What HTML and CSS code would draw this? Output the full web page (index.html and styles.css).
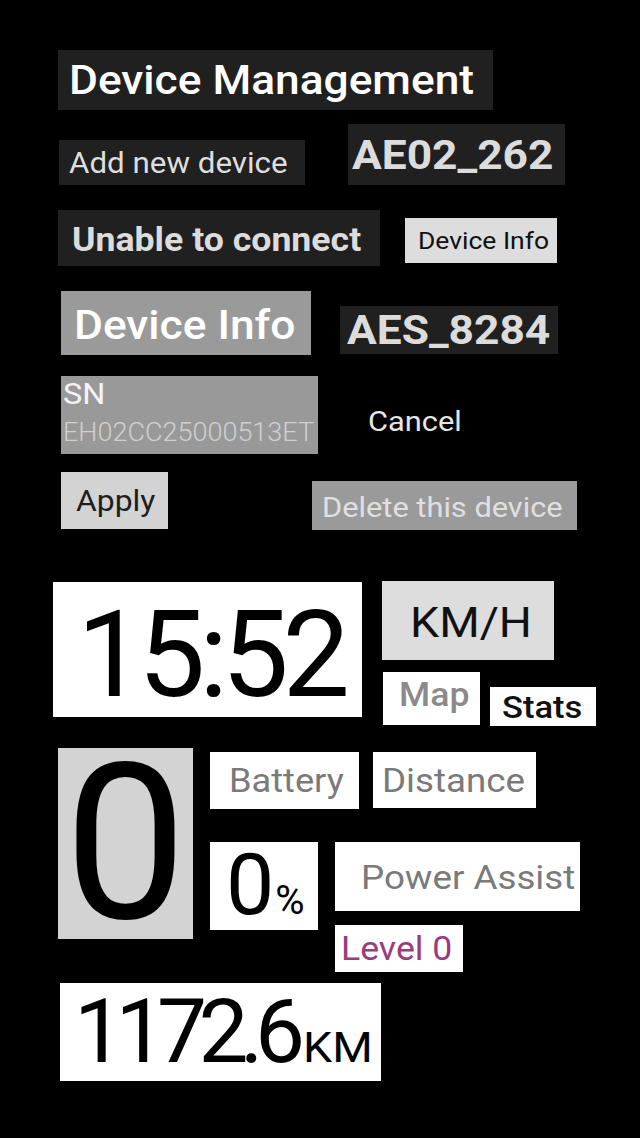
FILE: index.html
```html
<!DOCTYPE html>
<html lang="en">
<head>
<meta charset="utf-8">
<title>Device Management</title>
<link rel="stylesheet" href="styles.css">
</head>
<body>
<main class="screen">
  <div class="row r1">
    <div class="box title"><span class="t">Device Management</span></div>
  </div>
  <div class="row r2">
    <div class="box add"><span class="t">Add new device</span></div>
    <div class="box ae02"><span class="t">AE02_262</span></div>
  </div>
  <div class="row r3">
    <div class="box unable"><span class="t">Unable to connect</span></div>
    <div class="box info-sm"><span class="t">Device Info</span></div>
  </div>
  <div class="row r4">
    <div class="box info-lg"><span class="t">Device Info</span></div>
    <div class="box aes"><span class="t">AES_8284</span></div>
  </div>
  <div class="row r5">
    <div class="sn">
      <span class="t sn-label">SN</span>
      <span class="t sn-value">EH02CC25000513ET</span>
    </div>
    <div class="cancel"><span class="t">Cancel</span></div>
  </div>
  <div class="row r6">
    <div class="box apply"><span class="t">Apply</span></div>
    <div class="box delete"><span class="t">Delete this device</span></div>
  </div>
  <div class="row r7">
    <div class="box clock">15:52</div>
    <div class="col right7">
      <div class="box kmh"><span class="t">KM/H</span></div>
      <div class="row">
        <div class="box map"><span class="t">Map</span></div>
        <div class="box stats"><span class="t">Stats</span></div>
      </div>
    </div>
  </div>
  <div class="row r8">
    <div class="box speed">0</div>
    <div class="col mid8">
      <div class="row">
        <div class="box battery"><span class="t">Battery</span></div>
        <div class="box distance"><span class="t">Distance</span></div>
      </div>
      <div class="row r8b">
        <div class="box pct"><span class="pct-num">0</span><span class="pct-sign">%</span></div>
        <div class="col assist-col">
          <div class="box assist"><span class="t">Power Assist</span></div>
          <div class="box level"><span class="t">Level 0</span></div>
        </div>
      </div>
    </div>
  </div>
  <div class="row r9">
    <div class="box odo"><span class="odo-num">1172.6</span><span class="t odo-unit">KM</span></div>
  </div>
</main>
</body>
</html>
```

FILE: styles.css
```css
html, body {
  margin: 0;
  padding: 0;
  background: #000;
}
body {
  font-family: Roboto, "Liberation Sans", sans-serif;
  width: 640px;
  height: 1138px;
  overflow: hidden;
}
.screen {
  padding-top: 50px;
}
.row {
  display: flex;
  align-items: flex-start;
}
.col {
  display: flex;
  flex-direction: column;
  align-items: flex-start;
}
.box {
  display: flex;
  align-items: center;
  box-sizing: border-box;
  white-space: nowrap;
  flex: none;
}
/* the source screen's lettering is slightly wider than it is tall */
.t {
  display: inline-block;
  transform: scaleX(1.08);
  transform-origin: 0 50%;
  white-space: nowrap;
}

/* row 1 */
.title {
  margin-left: 58px;
  width: 435px;
  height: 60px;
  padding-left: 11px;
  background: #202020;
  color: #fff;
  font-size: 41px;
  font-weight: 500;
}

/* row 2 */
.r2 { margin-top: 14px; align-items: flex-end; }
.add {
  margin-left: 59px;
  width: 246px;
  height: 45px;
  padding-left: 10px;
  background: #202020;
  color: #dedede;
  font-size: 29px;
}
.ae02 {
  margin-left: 43px;
  width: 217px;
  height: 61px;
  padding-left: 4px;
  background: #202020;
  color: #dcdcdc;
  font-size: 41px;
  font-weight: 700;
}

/* row 3 */
.r3 { margin-top: 25px; }
.unable {
  margin-left: 58px;
  width: 322px;
  height: 56px;
  padding-left: 14px;
  padding-top: 2px;
  background: #202020;
  color: #dcdcdc;
  font-size: 33px;
  font-weight: 700;
}
.info-sm {
  margin-left: 25px;
  margin-top: 8px;
  width: 152px;
  height: 45px;
  padding-left: 13px;
  background: #dddddd;
  color: #111;
  font-size: 24.5px;
}

/* row 4 */
.r4 { margin-top: 25px; }
.info-lg {
  margin-left: 61px;
  width: 250px;
  height: 64px;
  padding-left: 13px;
  padding-top: 3px;
  background: #9a9a9a;
  color: #fff;
  font-size: 41px;
  font-weight: 500;
}
.aes {
  margin-left: 29px;
  margin-top: 15px;
  width: 218px;
  height: 48px;
  padding-left: 7px;
  background: #202020;
  color: #dcdcdc;
  font-size: 41px;
  font-weight: 700;
}

/* row 5 */
.r5 { margin-top: 21px; }
.sn {
  margin-left: 61px;
  width: 257px;
  height: 78px;
  box-sizing: border-box;
  padding-left: 2px;
  background: #999999;
  display: flex;
  flex-direction: column;
  align-items: flex-start;
  overflow: hidden;
}
.sn-label {
  color: #f4f4f4;
  font-size: 30px;
  line-height: 36px;
}
.sn-value {
  color: #d0d0d0;
  font-size: 25px;
  line-height: 42px;
  font-weight: 300;
}
.cancel {
  margin-left: 50px;
  margin-top: 32px;
  color: #e6e6e6;
  font-size: 28.5px;
  line-height: 28px;
}

/* row 6 */
.r6 { margin-top: 18px; }
.apply {
  margin-left: 61px;
  width: 107px;
  height: 57px;
  padding-left: 15px;
  background: #d3d3d3;
  color: #1e1e1e;
  font-size: 29.5px;
}
.delete {
  margin-left: 144px;
  margin-top: 9px;
  width: 265px;
  height: 49px;
  padding-left: 10px;
  padding-top: 4px;
  background: #9a9a9a;
  color: #e0e0e0;
  font-size: 28.5px;
}

/* row 7 */
.r7 { margin-top: 51px; }
.clock {
  margin-left: 53px;
  margin-top: 1px;
  width: 309px;
  height: 135px;
  padding-left: 24px;
  padding-top: 11px;
  background: #fff;
  color: #000;
  font-size: 120px;
  letter-spacing: -6.5px;
}
.right7 { margin-left: 20px; }
.kmh {
  width: 172px;
  height: 79px;
  padding-left: 28px;
  padding-top: 2px;
  background: #dddddd;
  color: #111;
  font-size: 43px;
}
.map {
  margin-left: 1px;
  margin-top: 12px;
  width: 97px;
  height: 53px;
  padding-left: 16px;
  padding-bottom: 9px;
  background: #fff;
  color: #8a8a8a;
  font-size: 33px;
  font-weight: 500;
}
.stats {
  margin-left: 10px;
  margin-top: 27px;
  width: 106px;
  height: 39px;
  padding-left: 12px;
  background: #fff;
  color: #111;
  font-size: 32px;
  font-weight: 500;
}

/* row 8 */
.r8 { margin-top: 22px; }
.speed {
  margin-left: 58px;
  width: 135px;
  height: 191px;
  justify-content: center;
  background: #d3d3d3;
  color: #000;
  font-size: 218px;
}
.mid8 { margin-left: 17px; margin-top: 4px; }
.battery {
  width: 149px;
  height: 57px;
  padding-left: 19px;
  background: #fff;
  color: #7a7a7a;
  font-size: 33.5px;
}
.distance {
  margin-left: 14px;
  width: 163px;
  height: 56px;
  padding-left: 9px;
  background: #fff;
  color: #7a7a7a;
  font-size: 34px;
}
.r8b { margin-top: 33px; }
.pct {
  width: 108px;
  height: 88px;
  padding-left: 16px;
  align-items: baseline;
  padding-top: 0;
  background: #fff;
  color: #000;
}
.pct-num {
  font-size: 86px;
  line-height: 86px;
  letter-spacing: -2px;
}
.pct-sign {
  font-size: 40px;
  margin-left: 3px;
}
.assist-col { margin-left: 17px; }
.assist {
  width: 245px;
  height: 69px;
  padding-left: 26px;
  background: #fff;
  color: #7a7a7a;
  font-size: 34px;
}
.level {
  margin-top: 14px;
  width: 128px;
  height: 47px;
  padding-left: 6px;
  background: #fff;
  color: #9a3b7c;
  font-size: 33px;
}

/* row 9 */
.r9 { margin-top: 11px; }
.odo {
  margin-left: 60px;
  width: 321px;
  height: 98px;
  padding-left: 14px;
  align-items: baseline;
  padding-top: 2px;
  background: #fff;
  color: #000;
}
.odo-num {
  font-size: 89px;
  line-height: 94px;
  letter-spacing: -8.5px;
}
.odo-unit {
  font-size: 43px;
  margin-left: 6px;
}
```
